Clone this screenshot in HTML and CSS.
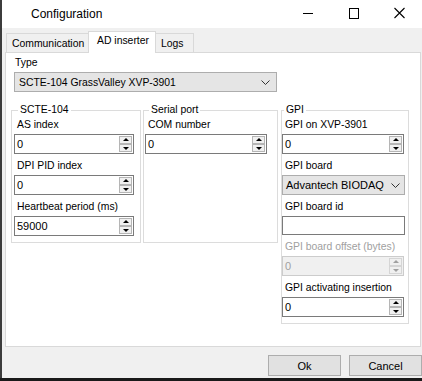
FILE: index.html
```html
<!DOCTYPE html>
<html lang="en">
<head>
    <meta charset="UTF-8">
    <title>Configuration</title>
    <link rel="stylesheet" href="styles.css">
</head>
<body>
    <div class="window">
        <div class="titlebar">
            <span class="title">Configuration</span>
            <div class="controls">
                <svg class="ctl" width="46" height="28" viewBox="0 0 46 28"><path d="M18 13.5h10" stroke="#000" stroke-width="1"/></svg>
                <svg class="ctl" width="46" height="28" viewBox="0 0 46 28"><rect x="18.5" y="8.5" width="9" height="10" fill="none" stroke="#000" stroke-width="1"/></svg>
                <svg class="ctl" width="46" height="28" viewBox="0 0 46 28"><path d="M17.5 8l10 10M27.5 8l-10 10" stroke="#000" stroke-width="1.1"/></svg>
            </div>
        </div>

        <div class="tabs">
            <div class="tab tab-comm">Communication</div>
            <div class="tab tab-active">AD inserter</div>
            <div class="tab tab-logs">Logs</div>
        </div>

        <div class="panel">
            <div class="type-field">
                <div class="label">Type</div>
                <div class="combo combo-type">
                    <span>SCTE-104 GrassValley XVP-3901</span>
                    <svg width="9" height="5" viewBox="0 0 9 5"><path d="M0.5 0.5l4 4 4-4" fill="none" stroke="#333" stroke-width="1"/></svg>
                </div>
            </div>

            <div class="groups">
                <div class="groups-left">
                    <fieldset class="group group-scte">
                        <legend>SCTE-104</legend>
                        <div class="field">
                            <div class="label">AS index</div>
                            <div class="spin"><span>0</span><div class="spin-btns"><i class="up"></i><i class="down"></i></div></div>
                        </div>
                        <div class="field">
                            <div class="label">DPI PID index</div>
                            <div class="spin"><span>0</span><div class="spin-btns"><i class="up"></i><i class="down"></i></div></div>
                        </div>
                        <div class="field">
                            <div class="label">Heartbeat period (ms)</div>
                            <div class="spin"><span>59000</span><div class="spin-btns"><i class="up"></i><i class="down"></i></div></div>
                        </div>
                    </fieldset>
                    <fieldset class="group group-serial">
                        <legend>Serial port</legend>
                        <div class="field">
                            <div class="label">COM number</div>
                            <div class="spin wide"><span>0</span><div class="spin-btns"><i class="up"></i><i class="down"></i></div></div>
                        </div>
                    </fieldset>
                </div>
                <fieldset class="group group-gpi">
                    <legend>GPI</legend>
                    <div class="field">
                        <div class="label">GPI on XVP-3901</div>
                        <div class="spin wide"><span>0</span><div class="spin-btns"><i class="up"></i><i class="down"></i></div></div>
                    </div>
                    <div class="field">
                        <div class="label">GPI board</div>
                        <div class="combo combo-gpi">
                            <span>Advantech BIODAQ</span>
                            <svg width="9" height="5" viewBox="0 0 9 5"><path d="M0.5 0.5l4 4 4-4" fill="none" stroke="#333" stroke-width="1"/></svg>
                        </div>
                    </div>
                    <div class="field">
                        <div class="label">GPI board id</div>
                        <div class="textbox"></div>
                    </div>
                    <div class="field disabled">
                        <div class="label">GPI board offset (bytes)</div>
                        <div class="spin wide"><span>0</span><div class="spin-btns"><i class="up"></i><i class="down"></i></div></div>
                    </div>
                    <div class="field">
                        <div class="label">GPI activating insertion</div>
                        <div class="spin wide"><span>0</span><div class="spin-btns"><i class="up"></i><i class="down"></i></div></div>
                    </div>
                </fieldset>
            </div>
        </div>

        <div class="footer">
            <button class="btn">Ok</button>
            <button class="btn">Cancel</button>
        </div>
    </div>
</body>
</html>
```

FILE: styles.css
```css
body {
    margin: 0;
    background-color: #1a1a1a;
    font-family: "Liberation Sans", Arial, sans-serif;
    font-size: 10.4px;
    color: #000;
}
.window {
    width: 420px;
    height: 378px;
    border-left: 2px solid #3c3c3c;
    background-color: #f0f0f0;
    display: flex;
    flex-direction: column;
}
.titlebar {
    height: 28px;
    background-color: #fff;
    display: flex;
    align-items: center;
    justify-content: space-between;
}
.title {
    font-size: 12px;
    margin-left: 29px;
    margin-top: -1px;
}
.controls {
    display: flex;
    margin-right: -1px;
}
.ctl {
    display: block;
}
.tabs {
    height: 24px;
    display: flex;
    align-items: flex-end;
    padding-left: 4px;
    position: relative;
    z-index: 1;
}
.tab {
    height: 19px;
    line-height: 19px;
    box-sizing: border-box;
    border: 1px solid #d9d9d9;
    border-bottom: none;
    background-color: #f0f0f0;
    padding-left: 5px;
}
.tab-comm {
    width: 83px;
}
.tab-active {
    width: 68px;
    height: 22px;
    line-height: 17px;
    background-color: #fff;
    padding-left: 8px;
    margin-left: -1px;
    margin-bottom: -1px;
}
.tab-logs {
    width: 39px;
    margin-left: -1px;
}
.panel {
    flex: 1;
    margin: 0 1px 0 3px;
    border: 1px solid #d9d9d9;
    background-color: #fff;
    padding: 3px 0 0 5px;
}
.label {
    line-height: 14px;
    margin-bottom: 2px;
    padding-left: 3px;
    white-space: nowrap;
}
.type-field {
    margin-left: 3px;
}
.type-field .label {
    padding-left: 1px;
}
.combo {
    height: 20px;
    box-sizing: border-box;
    border: 1px solid #adadad;
    background-color: #e5e5e5;
    display: flex;
    align-items: center;
    justify-content: space-between;
    padding: 0 6px 0 4px;
}
.combo-type {
    width: 263px;
}
.combo-gpi {
    width: 123px;
    padding: 0 4px 0 3px;
    font-size: 11px;
}
.groups {
    display: flex;
    align-items: flex-start;
    margin-top: 11px;
}
.groups-left {
    display: flex;
    gap: 2px;
}
.group {
    margin: 0;
    border: 1px solid #dcdcdc;
    padding: 1px 2px 1px 2px;
    min-width: 0;
}
.group legend {
    line-height: 14px;
    padding: 0 2px;
    margin-left: 4px;
}
.group-scte {
    width: 130px;
    box-sizing: border-box;
}
.group-serial {
    width: 135px;
    box-sizing: border-box;
    padding-left: 1px;
}
.group-gpi {
    width: 128px;
    box-sizing: border-box;
    margin-left: 3px;
    padding-left: 0;
}
.group-gpi legend {
    margin-left: 2px;
}
.field {
    margin-bottom: 5px;
}
.spin {
    width: 120px;
    height: 20px;
    box-sizing: border-box;
    border: 1px solid #7a7a7a;
    background-color: #fff;
    display: flex;
    align-items: center;
    justify-content: space-between;
    padding: 0 1px 0 2px;
    font-size: 11px;
}
.spin.wide {
    width: 122px;
}
.spin-btns {
    display: flex;
    flex-direction: column;
}
.spin-btns i {
    display: block;
    width: 13px;
    height: 8px;
    box-sizing: border-box;
    border: 1px solid #b5b5b5;
    background-color: #f0f0f0;
    position: relative;
}
.spin-btns i::after {
    content: "";
    position: absolute;
    left: 3px;
    top: 1px;
    border-left: 3px solid transparent;
    border-right: 3px solid transparent;
}
.spin-btns .up::after {
    border-bottom: 3px solid #000;
}
.spin-btns .down::after {
    border-top: 3px solid #000;
    top: 2px;
}
.textbox {
    width: 123px;
    height: 19px;
    box-sizing: border-box;
    border: 1px solid #7a7a7a;
    background-color: #fff;
}
.disabled .label {
    color: #a0a0a0;
}
.disabled .spin {
    background-color: #f0f0f0;
    border-color: #cccccc;
    color: #a0a0a0;
}
.disabled .spin-btns i {
    border-color: #d5d5d5;
}
.disabled .spin-btns .up::after {
    border-bottom-color: #a0a0a0;
}
.disabled .spin-btns .down::after {
    border-top-color: #a0a0a0;
}
.footer {
    height: 31px;
    display: flex;
    justify-content: flex-end;
    align-items: flex-start;
    gap: 8px;
    padding-top: 8px;
    box-sizing: border-box;
}
.btn {
    width: 73px;
    height: 21px;
    border: 1px solid #adadad;
    background-color: #e1e1e1;
    font-family: "Liberation Sans", Arial, sans-serif;
    font-size: 11px;
    color: #000;
    padding: 0;
}
```
